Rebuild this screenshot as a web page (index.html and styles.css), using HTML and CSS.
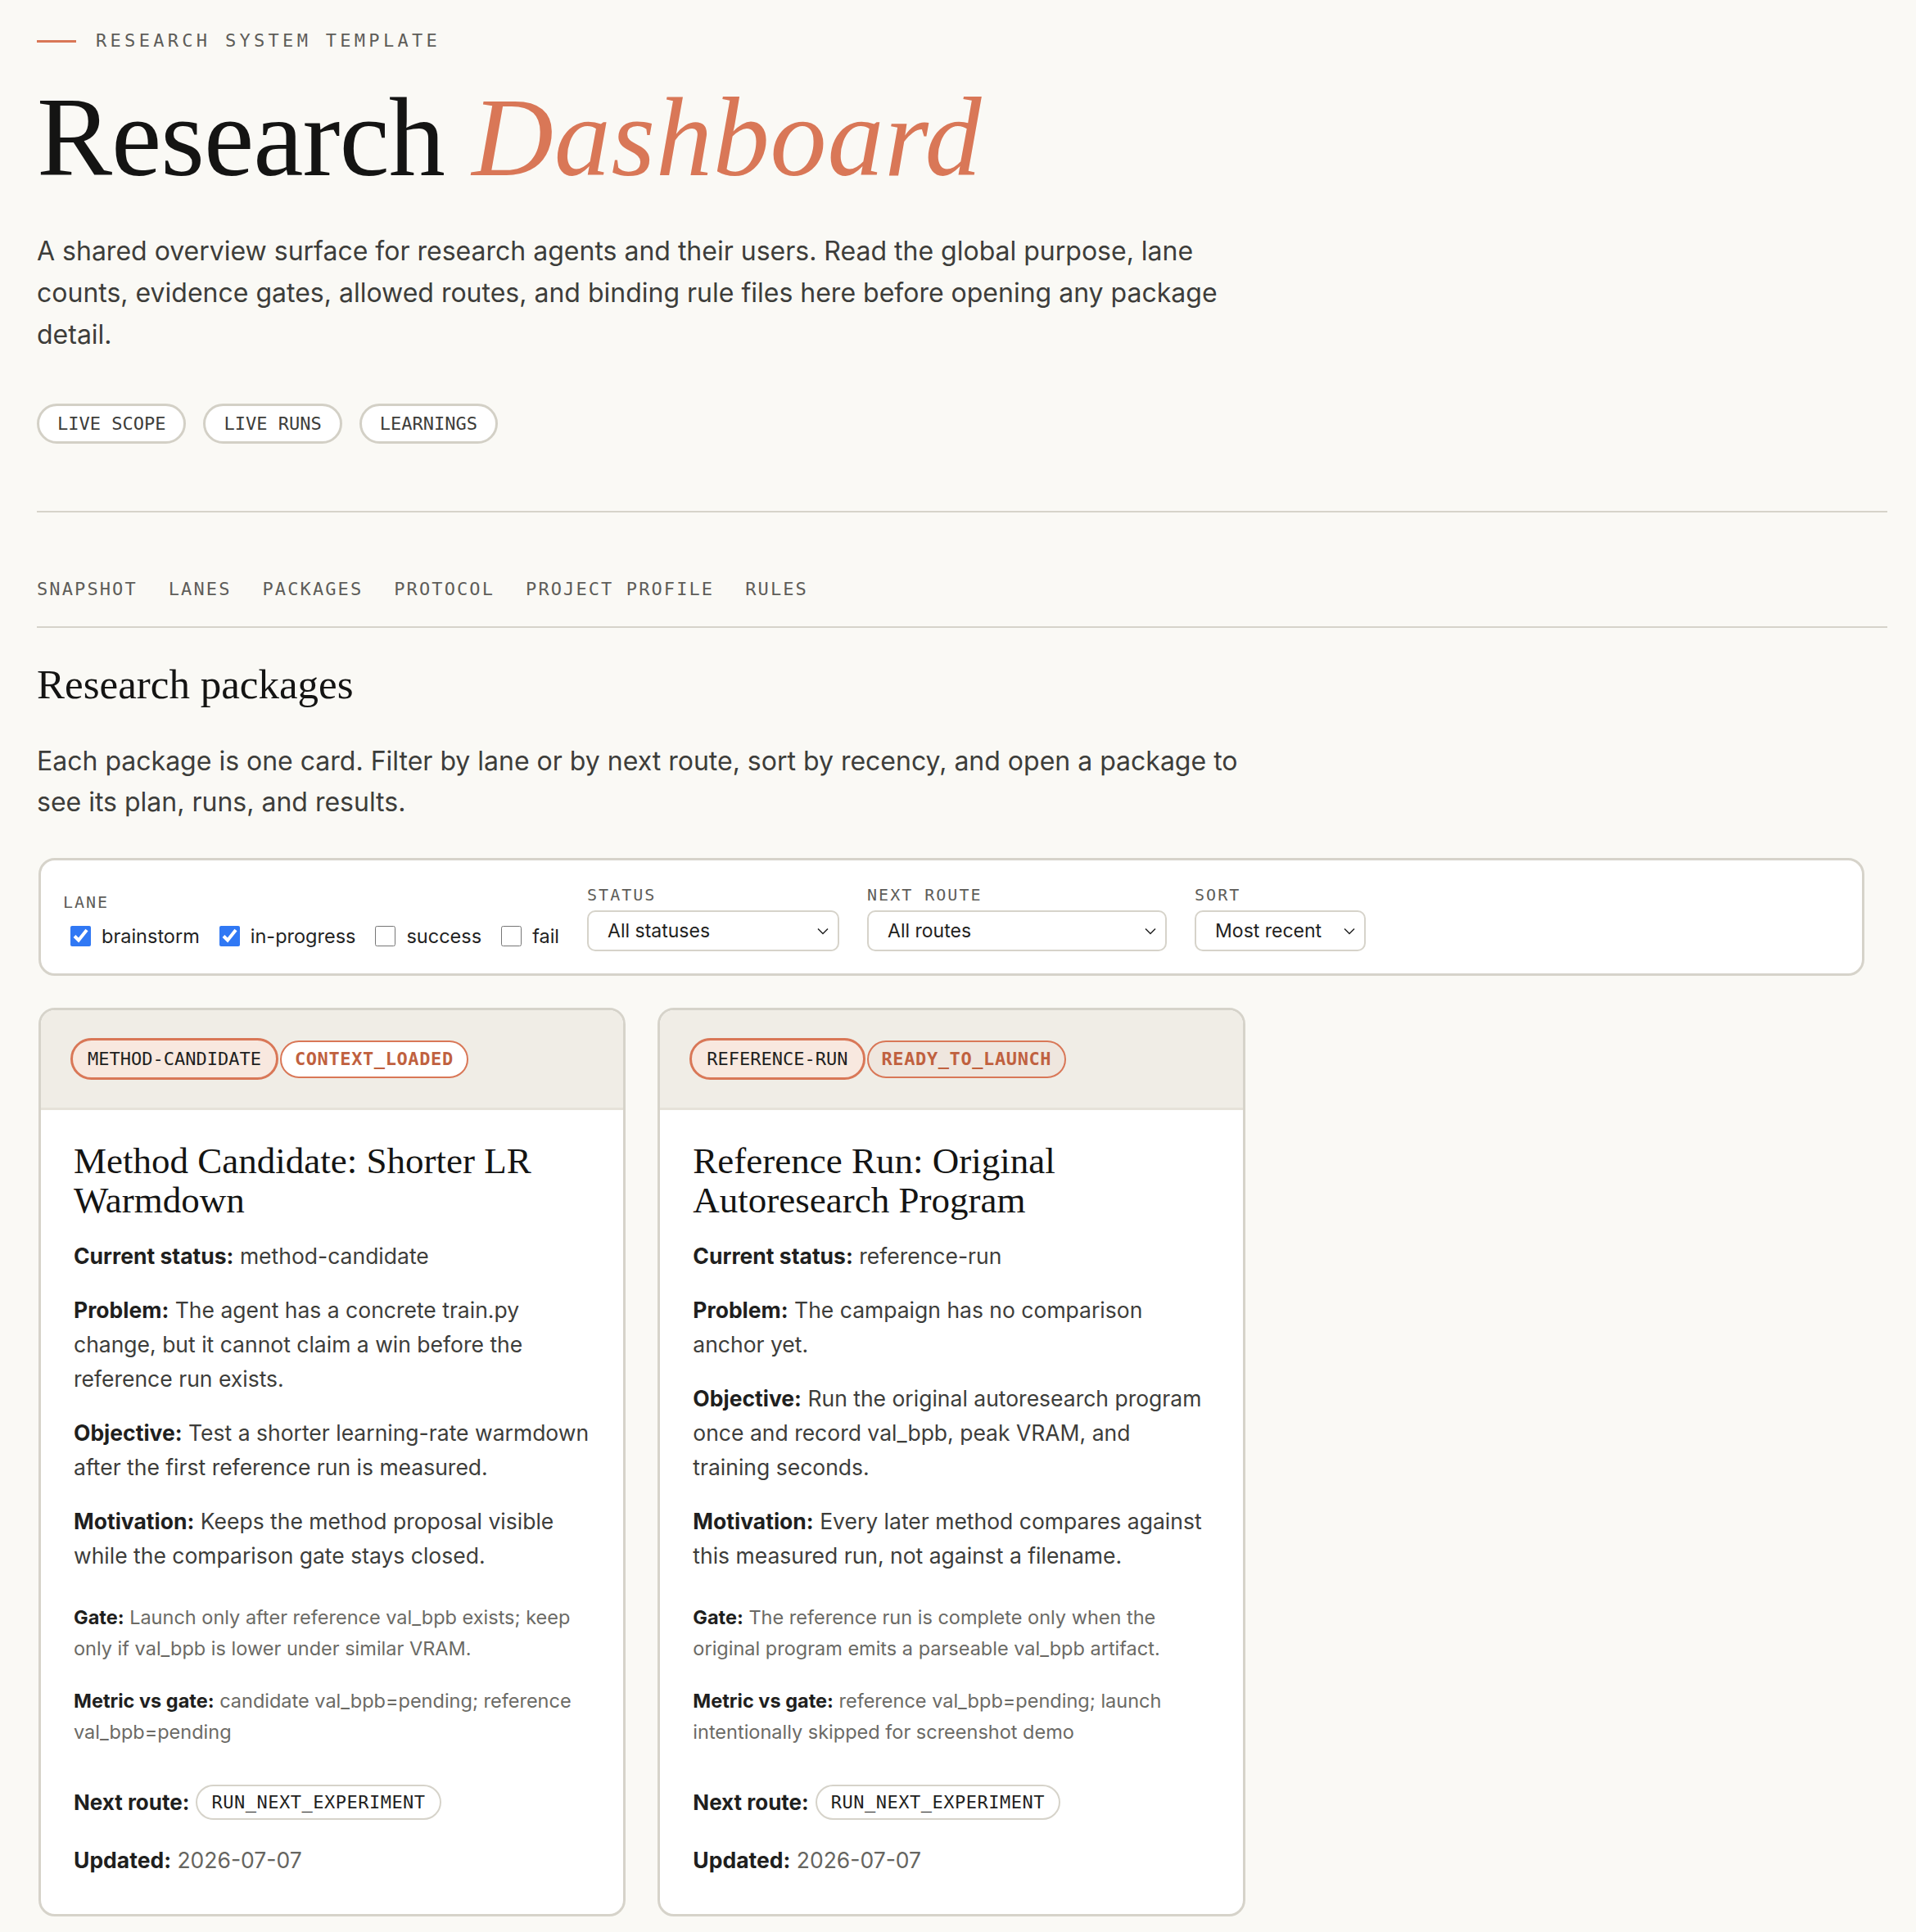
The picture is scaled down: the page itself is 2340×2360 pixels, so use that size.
FILE: index.html
```html
<!DOCTYPE html>
<html lang="en">
<head>
  <meta charset="UTF-8">
  <meta name="viewport" content="width=device-width, initial-scale=1.0">
  <title>Research Dashboard</title>
  <link rel="stylesheet" href="styles.css">
</head>
<body>
  <main class="page">
    <header class="hero">
      <p class="eyebrow"><span class="eyebrow-rule"></span>Research system template</p>
      <h1 class="title">Research <em>Dashboard</em></h1>
      <p class="lede">A shared overview surface for research agents and their users. Read the global purpose, lane counts, evidence gates, allowed routes, and binding rule files here before opening any package detail.</p>
      <div class="quick-links">
        <a class="pill" href="#">Live scope</a>
        <a class="pill" href="#">Live runs</a>
        <a class="pill" href="#">Learnings</a>
      </div>
    </header>

    <nav class="tabs">
      <a href="#snapshot">Snapshot</a>
      <a href="#lanes">Lanes</a>
      <a href="#packages">Packages</a>
      <a href="#protocol">Protocol</a>
      <a href="#profile">Project profile</a>
      <a href="#rules">Rules</a>
    </nav>

    <section class="packages" id="packages">
      <h2 class="section-title">Research packages</h2>
      <p class="lede">Each package is one card. Filter by lane or by next route, sort by recency, and open a package to see its plan, runs, and results.</p>

      <form class="filters">
        <div class="field">
          <span class="field-label">Lane</span>
          <div class="checks">
            <label class="check"><input type="checkbox" checked> brainstorm</label>
            <label class="check"><input type="checkbox" checked> in-progress</label>
            <label class="check"><input type="checkbox"> success</label>
            <label class="check"><input type="checkbox"> fail</label>
          </div>
        </div>
        <label class="field">
          <span class="field-label">Status</span>
          <span class="select-wrap select-status">
            <select><option>All statuses</option></select>
            <svg class="chevron" viewBox="0 0 14 8"><path d="M1 1l6 6 6-6" /></svg>
          </span>
        </label>
        <label class="field">
          <span class="field-label">Next route</span>
          <span class="select-wrap select-route">
            <select><option>All routes</option></select>
            <svg class="chevron" viewBox="0 0 14 8"><path d="M1 1l6 6 6-6" /></svg>
          </span>
        </label>
        <label class="field">
          <span class="field-label">Sort</span>
          <span class="select-wrap select-sort">
            <select><option>Most recent</option></select>
            <svg class="chevron" viewBox="0 0 14 8"><path d="M1 1l6 6 6-6" /></svg>
          </span>
        </label>
      </form>

      <div class="cards">
        <article class="card">
          <div class="card-head">
            <span class="tag tag-lane">method-candidate</span>
            <span class="tag tag-state">context_loaded</span>
          </div>
          <div class="card-body">
            <h3 class="card-title">Method Candidate: Shorter LR Warmdown</h3>
            <p class="row"><b>Current status:</b> method-candidate</p>
            <p class="row"><b>Problem:</b> The agent has a concrete train.py change, but it cannot claim a win before the reference run exists.</p>
            <p class="row"><b>Objective:</b> Test a shorter learning-rate warmdown after the first reference run is measured.</p>
            <p class="row"><b>Motivation:</b> Keeps the method proposal visible while the comparison gate stays closed.</p>
            <p class="note gate"><b>Gate:</b> Launch only after reference val_bpb exists; keep only if val_bpb is lower under similar VRAM.</p>
            <p class="note"><b>Metric vs gate:</b> candidate val_bpb=pending; reference val_bpb=pending</p>
            <p class="route"><b>Next route:</b> <span class="route-pill">RUN_NEXT_EXPERIMENT</span></p>
            <p class="row updated"><b>Updated:</b> 2026-07-07</p>
          </div>
        </article>

        <article class="card">
          <div class="card-head">
            <span class="tag tag-lane">reference-run</span>
            <span class="tag tag-state tag-ready">ready_to_launch</span>
          </div>
          <div class="card-body">
            <h3 class="card-title">Reference Run: Original Autoresearch Program</h3>
            <p class="row"><b>Current status:</b> reference-run</p>
            <p class="row"><b>Problem:</b> The campaign has no comparison anchor yet.</p>
            <p class="row"><b>Objective:</b> Run the original autoresearch program once and record val_bpb, peak VRAM, and training seconds.</p>
            <p class="row"><b>Motivation:</b> Every later method compares against this measured run, not against a filename.</p>
            <p class="note gate"><b>Gate:</b> The reference run is complete only when the original program emits a parseable val_bpb artifact.</p>
            <p class="note"><b>Metric vs gate:</b> reference val_bpb=pending; launch intentionally skipped for screenshot demo</p>
            <p class="route"><b>Next route:</b> <span class="route-pill">RUN_NEXT_EXPERIMENT</span></p>
            <p class="row updated"><b>Updated:</b> 2026-07-07</p>
          </div>
        </article>
      </div>
    </section>
  </main>
</body>
</html>
```

FILE: styles.css
```css
body {
  margin: 0;
  background: #faf9f5;
  color: #3d3d3a;
  font-family: Inter, "Noto Sans", sans-serif;
}
.page {
  padding: 38px 35px 40px 45px;
}

/* Hero */
.eyebrow {
  display: flex;
  align-items: center;
  margin: 0;
  font-family: "DejaVu Sans Mono", monospace;
  font-size: 22px;
  line-height: 24px;
  letter-spacing: 4.3px;
  text-transform: uppercase;
  color: #5e5d59;
}
.eyebrow-rule {
  width: 48px;
  height: 3px;
  margin-right: 24px;
  background: #d97757;
}
.title {
  margin: 33px 0 0;
  font-family: "Liberation Serif", serif;
  font-weight: 400;
  font-size: 138px;
  line-height: 146px;
  letter-spacing: -1px;
  color: #141413;
}
.title em {
  letter-spacing: 0.8px;
  color: #d97757;
}
.lede {
  max-width: 1490px;
  margin: 40px 0 0;
  font-size: 32px;
  line-height: 51px;
  color: #3d3d3a;
}
.quick-links {
  display: flex;
  gap: 21px;
  margin-top: 59px;
}
.pill {
  display: inline-flex;
  align-items: center;
  height: 49px;
  box-sizing: border-box;
  padding: 0 22px;
  border: 3px solid #d3d0c6;
  border-radius: 999px;
  background: #fff;
  font-family: "DejaVu Sans Mono", monospace;
  font-size: 22px;
  text-transform: uppercase;
  color: #3d3d3a;
  text-decoration: none;
}

/* Section nav */
.tabs {
  display: flex;
  gap: 38px;
  margin-top: 82px;
  padding: 79px 0 30px;
  border-top: 2px solid #d6d3ca;
  border-bottom: 2px solid #d6d3ca;
}
.tabs a {
  font-family: "DejaVu Sans Mono", monospace;
  font-size: 22px;
  line-height: 30px;
  letter-spacing: 2.1px;
  text-transform: uppercase;
  color: #5e5d59;
  text-decoration: none;
}

/* Packages */
.packages {
  margin-right: 28px;
}
.section-title {
  margin: 39px 0 0;
  font-family: "Liberation Serif", serif;
  font-weight: 400;
  font-size: 51px;
  line-height: 61px;
  color: #141413;
}
.packages .lede {
  margin-top: 38px;
  line-height: 50px;
}
.filters {
  display: flex;
  align-items: flex-end;
  gap: 34px;
  margin: 43px 0 0 2px;
  padding: 30px 27px 27px;
  border: 3px solid #d6d3ca;
  border-radius: 20px;
  background: #fff;
}
.field {
  display: flex;
  flex-direction: column;
}
.field-label {
  margin-bottom: 7px;
  font-family: "DejaVu Sans Mono", monospace;
  font-size: 20px;
  line-height: 24px;
  letter-spacing: 2px;
  text-transform: uppercase;
  color: #5e5d59;
}
.checks {
  display: flex;
  align-items: center;
  gap: 15px;
  height: 44px;
  margin-bottom: -3px;
}
.check {
  display: flex;
  align-items: center;
  font-size: 23.5px;
  color: #222;
}
.check input {
  width: 25px;
  height: 25px;
  margin: 0 13px 0 9px;
  accent-color: #3078f4;
}
.select-wrap {
  position: relative;
  display: block;
}
.select-wrap select {
  width: 100%;
  height: 50px;
  padding: 0 40px 0 23px;
  border: 2px solid #d6d3ca;
  border-radius: 10px;
  background: #fff;
  font-family: Inter, sans-serif;
  font-size: 23px;
  color: #1f1f1e;
  appearance: none;
}
.chevron {
  position: absolute;
  right: 13px;
  top: 21px;
  width: 14px;
  height: 9px;
  fill: none;
  stroke: #222;
  stroke-width: 1.5;
  pointer-events: none;
}
.select-status { width: 308px; }
.select-route { width: 366px; }
.select-sort { width: 209px; }

.cards {
  display: grid;
  grid-template-columns: repeat(3, 1fr);
  gap: 39px;
  margin: 39px 0 0 2px;
}
.card {
  display: flex;
  flex-direction: column;
  border: 3px solid #d6d3ca;
  border-radius: 20px;
  background: #fff;
  overflow: hidden;
}
.card-head {
  display: flex;
  align-items: center;
  gap: 2px;
  padding: 34px 36px;
  background: #f0ede6;
  border-bottom: 3px solid #e6e2d9;
}
.tag {
  display: inline-flex;
  align-items: center;
  box-sizing: border-box;
  border-radius: 999px;
  font-family: "DejaVu Sans Mono", monospace;
  font-size: 22px;
  text-transform: uppercase;
}
.tag-lane {
  height: 51px;
  padding: 0 18px;
  border: 3px solid #d97757;
  background: #f8e8df;
  color: #1f1f1e;
}
.tag-state {
  height: 46px;
  padding: 0 16px;
  border: 2px solid #d97757;
  background: #fff;
  color: #c0613f;
  font-weight: 700;
  letter-spacing: 0.6px;
}
.tag-ready {
  background: #efe6de;
}
.card-body {
  padding: 38px 40px 45px;
}
.card-title {
  margin: 0 0 23px;
  font-family: "Liberation Serif", serif;
  font-weight: 400;
  font-size: 45px;
  line-height: 48px;
  color: #141413;
}
.row {
  margin: 0 0 24px;
  font-size: 26.5px;
  line-height: 42px;
  color: #3d3d3a;
}
.row b,
.note b,
.route b {
  font-weight: 700;
  color: #1f1f1e;
}
.note {
  margin: 0 0 27px;
  font-size: 23.5px;
  line-height: 37.6px;
  color: #6b6a65;
}
.note.gate {
  margin-top: 36px;
}
.route {
  display: flex;
  align-items: center;
  gap: 8px;
  margin: 46px 0 28px;
  font-size: 26px;
}
.route-pill {
  display: inline-flex;
  align-items: center;
  height: 43px;
  box-sizing: border-box;
  padding: 0 17px;
  border: 2px solid #d6d3ca;
  border-radius: 999px;
  font-family: "DejaVu Sans Mono", monospace;
  font-size: 22px;
  letter-spacing: 0.5px;
  color: #1f1f1e;
}
.updated {
  margin: 0;
  color: #66655f;
}
```
